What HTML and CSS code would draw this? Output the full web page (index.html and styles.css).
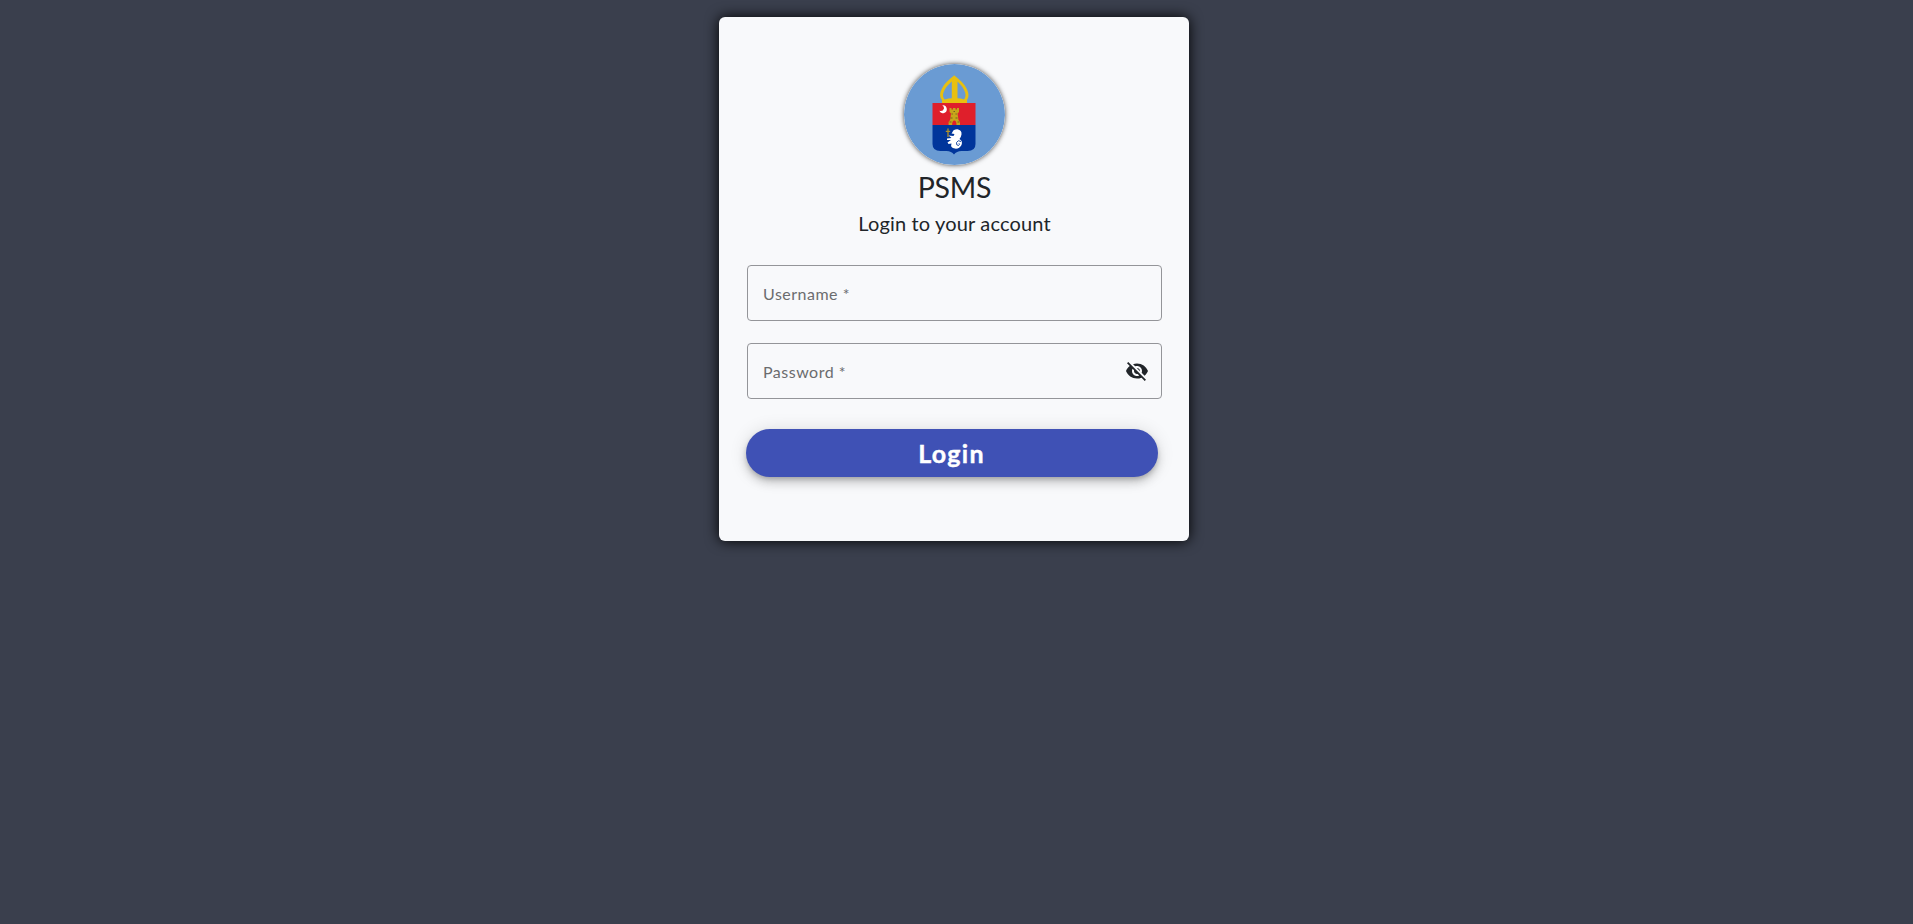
FILE: index.html
```html
<!DOCTYPE html>
<html lang="en">
<head>
<meta charset="utf-8">
<title>PSMS</title>
<link rel="stylesheet" href="styles.css">
</head>
<body>
<main class="card">
  <svg class="logo" viewBox="903.5 64 101 101" aria-label="Crest">
    <circle cx="954" cy="114.500" r="50.500" fill="#6a9bd3"/>
    <path fill="#e8c010" fill-rule="evenodd" d="M953.700 75.300C956 77.500 962 81.500 965.500 87.500C968.500 93 968.800 96.500 966.500 100V103.300H941.500V100C938.800 96.500 939 93 942 87.500C945.500 81.500 951.500 77.500 953.700 75.300Z M951.300 81.500C947 85 944.500 88.500 943 92.500C941.700 96 943 98 944.300 99.500Q948 98.200 951.300 98.200Z M957 81.500C961 85 963.200 88.500 964.600 92.500C965.700 96 964.500 98 963.500 99.500Q960.500 98.200 957 98.200Z"/>
    <path d="M932 103H975V125H932Z" fill="#df1f2b"/>
    <path d="M932 125H975V144Q975 151 967 151H961Q956 151 953.500 154.500Q951 151 946 151H940Q932 151 932 144Z" fill="#00359b"/>
    <path d="M941.800 105.400A3.900 3.900 0 1 1 938.800 110.800A3.700 3.700 0 0 0 943.500 108.500A3 3 0 0 0 941.800 105.400Z" fill="#fff"/>
    <path d="M949 108h2v1.500h1.500V108h2.500v1.500h1.500V108h2v4l-1.500 1.500 1 6.500 1.500 2v3h-3.500q0-4.500-2.200-4.500t-2.200 4.500h-3.500v-3l1.500-2 1-6.500-1.500-1.500Z" fill="#c7a51a"/>
    <path d="M951 114h1.300M955 114h1.300M950 118h2M955 118h2M953 111.500h1.500M949 122h2M957 122h2" stroke="#6b5a20" stroke-width=".9"/>
    <path d="M947.500 128.500V137M945.300 131.300H949.700" stroke="#b09028" stroke-width="1.300"/>
    <path d="M952 132Q953 129 957 129.200Q961.500 130 961 134.500Q960.600 137 959 139Q962.500 141 961 145Q959 149 954.500 148.600Q949.500 148 951 143.500L948 144L947 142.500L950.500 140L946.500 140V138.500L951 138L948 135.500L953 136L954 134L951 133.500Z" fill="#fff"/>
    <path d="M960.500 141.500Q957.500 139.500 956 142.500Q955.500 145.500 958 145.500Q959.500 144.500 958.500 143.300" fill="none" stroke="#00359b" stroke-width=".9"/>
  </svg>
  <h1 class="title">PSMS</h1>
  <p class="subtitle">Login to your account</p>
  <form class="form">
    <div class="field"><span class="label">Username *</span></div>
    <div class="field">
      <span class="label">Password *</span>
      <svg class="eye" viewBox="0 0 24 24"><path fill="currentColor" d="M12 7c2.760 0 5 2.240 5 5 0 .65-.13 1.260-.36 1.830l2.920 2.920c1.510-1.260 2.700-2.890 3.430-4.750-1.730-4.390-6-7.500-11-7.500-1.400 0-2.740.25-3.980.7l2.160 2.160C10.740 7.130 11.350 7 12 7zM2 4.270l2.280 2.280.46.46C3.080 8.300 1.780 10.020 1 12c1.730 4.390 6 7.500 11 7.500 1.550 0 3.030-.3 4.380-.84l.42.42L19.730 22 21 20.730 3.270 3 2 4.270zM7.530 9.800l1.550 1.550c-.05.21-.08.43-.08.65 0 1.660 1.340 3 3 3 .22 0 .44-.03.65-.08l1.550 1.550c-.67.33-1.410.53-2.200.53-2.760 0-5-2.240-5-5 0-.79.2-1.530.53-2.200zm4.310-.78l3.150 3.150.02-.16c0-1.660-1.340-3-3-3l-.17.01z"/></svg>
    </div>
    <button class="login" type="button">Login</button>
  </form>
</main>
</body>
</html>
```
FILE: styles.css
```css
* { box-sizing: border-box; }
body {
  margin: 0;
  padding-top: 17px;
  min-height: 100vh;
  background: #3a3f4d;
  color: #212529;
  font-family: Lato, sans-serif;
}
.card {
  width: 470px;
  height: 524px;
  margin-left: 719px;
  padding: 47px 27px 0 28px;
  display: flex;
  flex-direction: column;
  align-items: center;
  background: #f8f9fb;
  border-radius: 6px;
  box-shadow: 0 0 14px #000;
}
.logo {
  width: 101px;
  height: 101px;
  flex: none;
  margin-right: 1px;
  border-radius: 50%;
  box-shadow: 0 0 5px #444;
}
.title {
  margin: 4px 0 0;
  font-size: 28.5px;
  font-weight: 400;
  line-height: 36px;
  letter-spacing: -.2px;
}
.subtitle {
  margin: 5px 0 0;
  font-size: 20px;
  line-height: 26px;
  letter-spacing: .15px;
}
.form {
  align-self: stretch;
  display: flex;
  flex-direction: column;
  gap: 22px;
  margin-top: 29px;
}
.field {
  height: 56px;
  padding: 0 12px 0 15px;
  display: flex;
  align-items: center;
  justify-content: space-between;
  border: 1px solid #949599;
  border-radius: 4px;
}
.label {
  padding-top: 1px;
  color: #6b6c6e;
  font-size: 16px;
  letter-spacing: .5px;
}
.eye { width: 24px; height: 24px; color: #212529; }
.login {
  width: 412px;
  height: 48px;
  margin: 8px 0 0 -1px;
  padding: 0 1px 0 0;
  border: 0;
  border-radius: 24px;
  background: #3f51b5;
  color: #fff;
  font: 700 25px/30px Lato, sans-serif;
  letter-spacing: 1.25px;
  -webkit-text-stroke: .4px #fff;
  box-shadow: 0 3px 5px -1px rgba(0,0,0,.2), 0 6px 10px rgba(0,0,0,.14), 0 1px 18px rgba(0,0,0,.12);
}
```
